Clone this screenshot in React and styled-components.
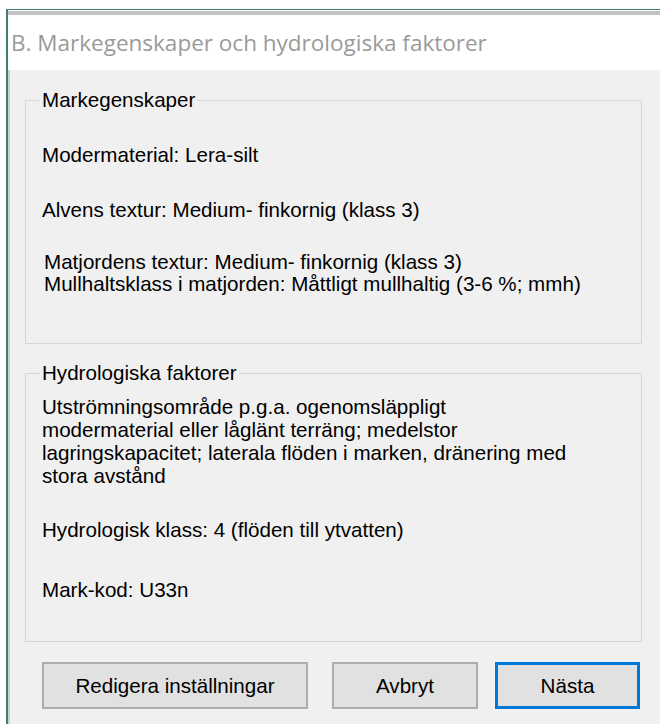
import React from "react";
import styled, { createGlobalStyle } from "styled-components";

const GlobalStyle = createGlobalStyle`
  html, body {
    margin: 0;
    padding: 0;
    background: #ffffff;
    overflow: hidden;
  }
`;

const Page = styled.div`
  padding: 9px 0 0 6px;
  height: 724px;
  box-sizing: border-box;
`;

const Window = styled.div`
  height: 100%;
  border-top: 1px solid #3f7d76;
  border-left: 2px solid #3f7d76;
  display: flex;
  flex-direction: column;
  background: #ffffff;
`;

const TitleBar = styled.div`
  margin-top: 1px;
  border-top: 4px solid #c4c4c4;
  height: 55px;
  display: flex;
  align-items: center;
  padding-left: 3px;
  font-family: "Open Sans", "Noto Sans", sans-serif;
  font-size: 22.5px;
  color: #9a9a9a;
  background: #ffffff;
`;

const Body = styled.div`
  flex: 1;
  background: #f0f0f0;
  border-left: 2px solid #cdcdcd;
  padding: 0 18px 0 15px;
  display: flex;
  flex-direction: column;
  font-family: "Liberation Sans", Arial, sans-serif;
  font-size: 20.6px;
  color: #000000;
`;

const Group = styled.fieldset`
  margin: ${(p) => p.$top}px 0 0 0;
  border: 1px solid #d6d6d6;
  padding: 0 16px ${(p) => p.$bottom}px 16px;
  min-width: 0;
`;

const Legend = styled.legend`
  padding: 0 2px;
  margin-left: -2px;
  line-height: 22px;
`;

const Line = styled.div`
  line-height: ${(p) => p.$lh || 22}px;
  margin-top: ${(p) => p.$gap || 0}px;
  padding-left: ${(p) => p.$indent || 0}px;
  white-space: nowrap;
`;

const ButtonRow = styled.div`
  display: flex;
  margin-top: 20px;
  padding-left: 17px;
`;

const Button = styled.button`
  width: ${(p) => p.$w}px;
  height: 47px;
  margin-left: ${(p) => p.$gap || 0}px;
  background: #e1e1e1;
  border: ${(p) => (p.$primary ? "3px solid #0078d7" : "2px solid #adadad")};
  font-family: "Liberation Sans", Arial, sans-serif;
  font-size: 20.6px;
  color: #000000;
  padding: 0;
  box-sizing: border-box;
`;

export default function App() {
  return (
    <>
      <GlobalStyle />
      <Page>
        <Window>
          <TitleBar>B. Markegenskaper och hydrologiska faktorer</TitleBar>
          <Body>
            <Group $top={19} $bottom={48}>
              <Legend>Markegenskaper</Legend>
              <Line $gap={33}>Modermaterial: Lera-silt</Line>
              <Line $gap={33}>Alvens textur: Medium- finkornig (klass 3)</Line>
              <Line $gap={30} $indent={2}>Matjordens textur: Medium- finkornig (klass 3)</Line>
              <Line $indent={2}>Mullhaltsklass i matjorden: Måttligt mullhaltig (3-6 %; mmh)</Line>
            </Group>
            <Group $top={18} $bottom={40}>
              <Legend>Hydrologiska faktorer</Legend>
              <Line $gap={11} $lh={23}>
                Utströmningsområde p.g.a. ogenomsläppligt
                <br />
                modermaterial eller låglänt terräng; medelstor
                <br />
                lagringskapacitet; laterala flöden i marken, dränering med
                <br />
                stora avstånd
              </Line>
              <Line $gap={31} $lh={23}>Hydrologisk klass: 4 (flöden till ytvatten)</Line>
              <Line $gap={37} $lh={23}>Mark-kod: U33n</Line>
            </Group>
            <ButtonRow>
              <Button $w={266}>Redigera inställningar</Button>
              <Button $w={146} $gap={24}>Avbryt</Button>
              <Button $w={145} $gap={17} $primary>Nästa</Button>
            </ButtonRow>
          </Body>
        </Window>
      </Page>
    </>
  );
}
